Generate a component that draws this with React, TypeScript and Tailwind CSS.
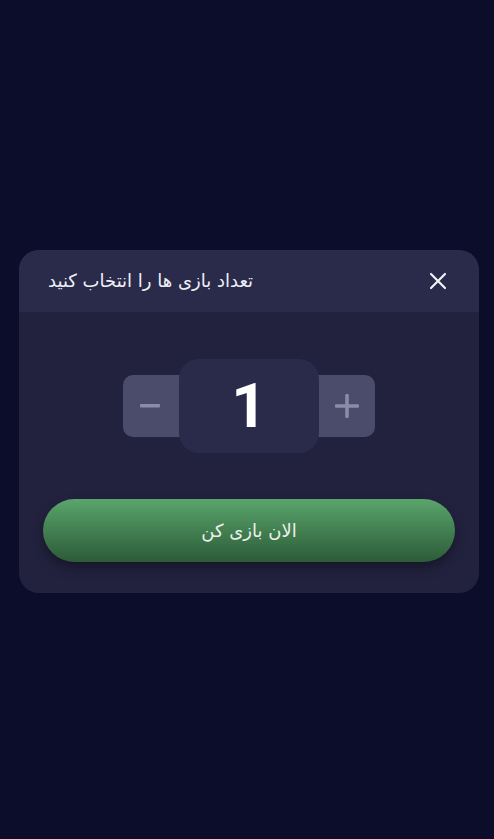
import { useState } from "react";

export default function App() {
  const [count, setCount] = useState(1);

  return (
    <div className="min-h-screen w-full bg-[#0c0d2a] flex items-center justify-center pl-[19px] pr-[15px] pt-[3px]">
      {/* Modal */}
      <div className="w-full h-[343px] rounded-[20px] bg-[#22223f] overflow-hidden flex flex-col">
        {/* Header */}
        <div className="h-[62px] bg-[#2a2b4a] flex items-center justify-between pl-[29px] pr-[32px]">
          <h2
            dir="rtl"
            className="text-[18px] text-[#eef0f6]"
            style={{ fontFamily: '"DejaVu Sans", sans-serif' }}
          >
            تعداد بازی ها را انتخاب کنید
          </h2>
          <button className="text-[#f2f2f6]">
            <svg width="18" height="18" viewBox="0 0 18 18" fill="none">
              <path d="M2 2L16 16M16 2L2 16" stroke="currentColor" strokeWidth="2.2" strokeLinecap="round" />
            </svg>
          </button>
        </div>

        {/* Stepper */}
        <div className="flex items-center justify-center mt-[47px]">
          <button
            onClick={() => setCount((c) => Math.max(1, c - 1))}
            className="w-[57px] h-[62px] bg-[#4b4c6c] rounded-l-[10px] flex items-center justify-start pl-[17px] text-[#8b8ca8]"
          >
            <svg width="20" height="4" viewBox="0 0 20 4">
              <rect x="0" y="0" width="20" height="3.5" rx="1" fill="currentColor" />
            </svg>
          </button>
          <div className="w-[140px] h-[94px] -mx-[1px] bg-[#2a2b4a] rounded-[20px] flex items-center justify-center z-10">
            <span
              className="text-[62px] font-bold text-white leading-none"
              style={{ fontFamily: "Roboto, sans-serif" }}
            >
              {count}
            </span>
          </div>
          <button
            onClick={() => setCount((c) => c + 1)}
            className="w-[57px] h-[62px] bg-[#4b4c6c] rounded-r-[10px] flex items-center justify-end pr-[16px] text-[#8b8ca8]"
          >
            <svg width="24" height="24" viewBox="0 0 24 24">
              <rect x="0" y="10.25" width="24" height="3.5" rx="1" fill="currentColor" />
              <rect x="10.25" y="0" width="3.5" height="24" rx="1" fill="currentColor" />
            </svg>
          </button>
        </div>

        {/* Play button */}
        <div className="px-[24px] mt-[46px]">
          <button
            dir="rtl"
            className="w-full h-[63px] rounded-full bg-gradient-to-b from-[#5aa56c] to-[#2d5c38] shadow-[0_6px_12px_rgba(0,0,0,0.35)] text-[18px] text-[#e9f1ea]"
            style={{ fontFamily: '"DejaVu Sans", sans-serif' }}
          >
            الان بازی کن
          </button>
        </div>
      </div>
    </div>
  );
}
